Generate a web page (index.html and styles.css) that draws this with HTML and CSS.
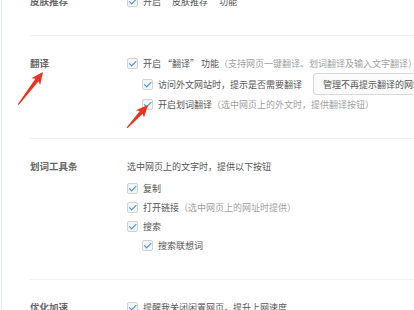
FILE: index.html
```html
<!DOCTYPE html>
<html lang="zh-CN">
<head>
    <meta charset="UTF-8">
    <title>设置</title>
    <link rel="stylesheet" href="styles.css">
</head>
<body>
    <div class="panel">
        <div class="section first">
            <div class="label">皮肤推荐</div>
            <div class="options">
                <div class="row"><span class="cb"></span>开启 “皮肤推荐” 功能</div>
            </div>
        </div>

        <div class="section">
            <div class="label">翻译</div>
            <div class="options">
                <div class="row"><span class="cb"></span>开启 “翻译” 功能<span class="hint">（支持网页一键翻译、划词翻译及输入文字翻译）</span></div>
                <div class="row sub tall"><span class="cb"></span>访问外文网站时，提示是否需要翻译<button class="btn" type="button">管理不再提示翻译的网站</button></div>
                <div class="row sub"><span class="cb"></span>开启划词翻译<span class="hint">（选中网页上的外文时，提供翻译按钮）</span></div>
            </div>
        </div>

        <div class="section">
            <div class="label">划词工具条</div>
            <div class="options">
                <div class="row desc">选中网页上的文字时，提供以下按钮</div>
                <div class="row"><span class="cb"></span>复制</div>
                <div class="row"><span class="cb"></span>打开链接<span class="hint">（选中网页上的网址时提供）</span></div>
                <div class="row"><span class="cb"></span>搜索</div>
                <div class="row sub"><span class="cb"></span>搜索联想词</div>
            </div>
        </div>

        <div class="section">
            <div class="label">优化加速</div>
            <div class="options">
                <div class="row"><span class="cb"></span>提醒我关闭闲置网页，提升上网速度</div>
            </div>
        </div>
    </div>

    <!-- 标注箭头 -->
    <svg class="marks" width="414" height="310" viewBox="0 0 414 310">
        <g transform="translate(43 72) rotate(-52.9)">
            <polygon points="0,0 -12,-5.5 -10,-2 -41,-0.6 -41,0.6 -10,2 -12,5.5" fill="#e8341f"/>
        </g>
        <g transform="translate(148 105) rotate(-47.6)">
            <polygon points="0,0 -12,-5.5 -10,-2 -31,-0.6 -31,0.6 -10,2 -12,5.5" fill="#e8341f"/>
        </g>
    </svg>
</body>
</html>
```

FILE: styles.css
```css
body {
    margin: 0;
    background-color: #fff;
    font-family: "Noto Sans CJK SC", "Noto Sans", sans-serif;
    font-size: 9px;
    color: #555;
    overflow: hidden;
    white-space: nowrap;
}
.panel {
    margin-left: 1px;
    border-left: 1px solid #e2eaf2;
    padding-left: 28px;
    min-height: 400px;
}
.section {
    display: flex;
    padding: 18px 0 24px;
    border-bottom: 1px solid #efefef;
}
.section.first {
    margin-top: -26px;
}
.label {
    width: 97px;
    flex-shrink: 0;
    height: 19px;
    line-height: 19px;
    font-size: 9.5px;
    font-weight: bold;
    color: #666;
}
.options {
    display: flex;
    flex-direction: column;
}
.row {
    display: flex;
    align-items: center;
    height: 19px;
}
.row.sub {
    padding-left: 15px;
}
.row.tall {
    height: 22px;
}
.row.desc {
    margin-bottom: 3px;
}
.cb {
    position: relative;
    width: 9px;
    height: 9px;
    margin-right: 5px;
    border: 1px solid #cfd3d8;
    border-radius: 2px;
    background-color: #f3f4f6;
    flex-shrink: 0;
}
.cb::after {
    content: "";
    position: absolute;
    left: 3px;
    top: 0px;
    width: 2.5px;
    height: 5.5px;
    border: solid #3b8fe3;
    border-width: 0 1.6px 1.6px 0;
    transform: rotate(45deg);
}
.hint {
    color: #a0a0a0;
}
.btn {
    margin-left: 11px;
    height: 22px;
    padding: 0 9px;
    border: 1px solid #d9d9d9;
    border-radius: 3px;
    background-color: #fbfbfb;
    font-family: inherit;
    font-size: 9px;
    color: #555;
}
.marks {
    position: absolute;
    left: 0;
    top: 0;
    pointer-events: none;
}
```
